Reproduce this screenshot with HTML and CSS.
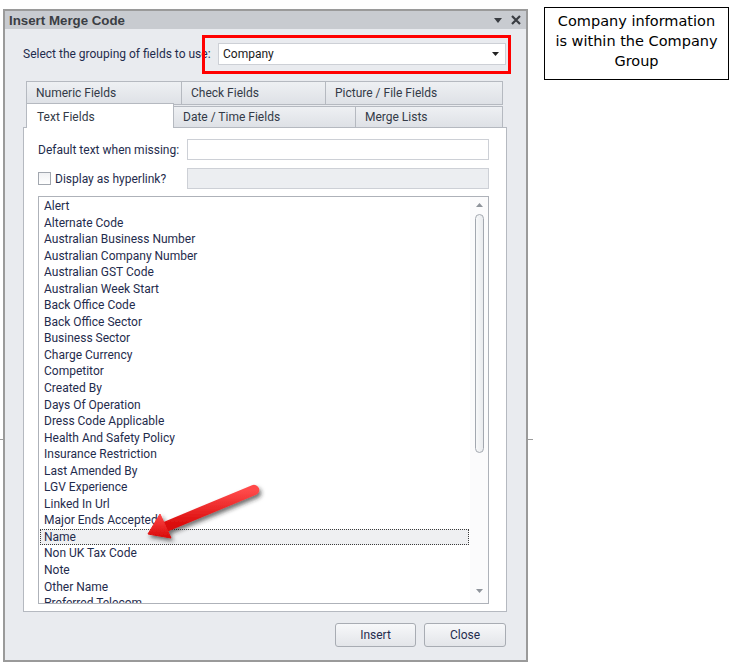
FILE: index.html
```html
<!DOCTYPE html>
<html lang="en">
<head>
    <meta charset="UTF-8">
    <meta name="viewport" content="width=device-width, initial-scale=1.0">
    <title>Insert Merge Code</title>
    <link rel="stylesheet" href="styles.css">
</head>
<body>
    <div class="backdrop-line"></div>

    <div class="dialog">
        <div class="titlebar">
            <span class="title">Insert Merge Code</span>
            <div class="title-buttons">
                <svg width="8" height="5" viewBox="0 0 8 5"><path d="M0 0h8L4 5z" fill="#3a3d42"/></svg>
                <svg width="10" height="10" viewBox="0 0 10 10"><path d="M1 1l8 8M9 1l-8 8" stroke="#3a3d42" stroke-width="2.2"/></svg>
            </div>
        </div>

        <div class="dialog-body">
            <div class="select-row">
                <label class="select-label">Select the grouping of fields to use:</label>
                <div class="combo">
                    <span>Company</span>
                    <svg width="7" height="4" viewBox="0 0 7 4"><path d="M0 0h7L3.5 4z" fill="#222"/></svg>
                </div>
                <div class="highlight-box"></div>
            </div>

            <div class="tabs">
                <div class="tab-row back">
                    <div class="tab w-numeric">Numeric Fields</div>
                    <div class="tab w-check">Check Fields</div>
                    <div class="tab w-picture">Picture / File Fields</div>
                </div>
                <div class="tab-row front">
                    <div class="tab active w-text">Text Fields</div>
                    <div class="tab w-date">Date / Time Fields</div>
                    <div class="tab w-merge">Merge Lists</div>
                </div>
            </div>

            <div class="tab-page">
                <div class="field-row">
                    <label class="field-label">Default text when missing:</label>
                    <div class="textbox"></div>
                </div>
                <div class="field-row">
                    <div class="field-label check">
                        <span class="checkbox"></span>
                        <span>Display as hyperlink?</span>
                    </div>
                    <div class="textbox disabled"></div>
                </div>

                <div class="listbox">
                    <ul class="items">
                        <li>Alert</li>
                        <li>Alternate Code</li>
                        <li>Australian Business Number</li>
                        <li>Australian Company Number</li>
                        <li>Australian GST Code</li>
                        <li>Australian Week Start</li>
                        <li>Back Office Code</li>
                        <li>Back Office Sector</li>
                        <li>Business Sector</li>
                        <li>Charge Currency</li>
                        <li>Competitor</li>
                        <li>Created By</li>
                        <li>Days Of Operation</li>
                        <li>Dress Code Applicable</li>
                        <li>Health And Safety Policy</li>
                        <li>Insurance Restriction</li>
                        <li>Last Amended By</li>
                        <li>LGV Experience</li>
                        <li>Linked In Url</li>
                        <li>Major Ends Accepted</li>
                        <li class="selected">Name</li>
                        <li>Non UK Tax Code</li>
                        <li>Note</li>
                        <li>Other Name</li>
                        <li>Preferred Telecom</li>
                    </ul>
                    <div class="scrollbar">
                        <div class="scroll-btn">
                            <svg width="7" height="4" viewBox="0 0 7 4"><path d="M0 4h7L3.5 0z" fill="#8f949b"/></svg>
                        </div>
                        <div class="thumb"></div>
                        <div class="scroll-btn down">
                            <svg width="7" height="4" viewBox="0 0 7 4"><path d="M0 0h7L3.5 4z" fill="#8f949b"/></svg>
                        </div>
                    </div>
                </div>
            </div>

            <div class="buttons">
                <button class="btn w-insert">Insert</button>
                <button class="btn w-close">Close</button>
            </div>
        </div>
    </div>

    <div class="note">Company information<br>is within the Company<br>Group</div>

    <svg class="arrow" width="150" height="90" viewBox="130 470 150 90">
        <defs>
            <filter id="shadow" x="-20%" y="-20%" width="150%" height="160%">
                <feDropShadow dx="2" dy="3" stdDeviation="2" flood-color="#222" flood-opacity="0.65"/>
            </filter>
            <linearGradient id="red" x1="0" y1="0" x2="0" y2="1">
                <stop offset="0" stop-color="#ff4a4a"/>
                <stop offset="1" stop-color="#d80808"/>
            </linearGradient>
        </defs>
        <g filter="url(#shadow)" fill="url(#red)" stroke="url(#red)">
            <line x1="254" y1="490" x2="165" y2="527" stroke-width="10.5" stroke-linecap="round"/>
            <path d="M148 534 L160 514 L171 538 Z" stroke-width="1" stroke-linejoin="round"/>
        </g>
    </svg>
</body>
</html>
```

FILE: styles.css
```css
:root {
    --ink: #1f2c4d;
    --frame: #9a9a9a;
    --tab-border: #b5b9c0;
    --field-border: #cdd0d6;
    --body-bg: #e9ebef;
}

body {
    font-family: Roboto, "Liberation Sans", Arial, sans-serif;
    font-size: 12px;
    color: var(--ink);
    margin: 0;
    background: #fff;
    display: flex;
    align-items: flex-start;
    position: relative;
    min-height: 666px;
}

.backdrop-line {
    position: absolute;
    left: 0;
    top: 439px;
    width: 533px;
    height: 1px;
    background: #9c9c9c;
    z-index: -1;
}

/* dialog frame */

.dialog {
    margin: 9px 0 0 3px;
    width: 525px;
    height: 653px;
    box-sizing: border-box;
    border: 2px solid var(--frame);
    background: var(--body-bg);
    display: flex;
    flex-direction: column;
}

.titlebar {
    height: 18px;
    background: #c8cbd0;
    display: flex;
    align-items: center;
    justify-content: space-between;
    padding: 0 5px 0 4px;
}

.title {
    font-family: "Liberation Sans", Arial, sans-serif;
    font-weight: 700;
    font-size: 13.3px;
    color: #3b3e44;
}

.title-buttons {
    display: flex;
    align-items: center;
    gap: 9px;
}

.dialog-body {
    flex: 1;
    display: flex;
    flex-direction: column;
    padding-top: 14px;
}

/* grouping selector */

.select-row {
    position: relative;
    display: flex;
    align-items: center;
    padding-left: 18px;
}

.select-label {
    width: 195px;
    flex: none;
}

.combo {
    width: 288px;
    height: 22px;
    box-sizing: border-box;
    border: 1px solid var(--field-border);
    background: #fff;
    display: flex;
    align-items: center;
    justify-content: space-between;
    padding: 0 6px 0 4px;
    color: #1a1a1a;
}

.highlight-box {
    position: absolute;
    left: 197px;
    top: -8px;
    width: 309px;
    height: 39px;
    box-sizing: border-box;
    border: 3px solid #f00;
}

/* tabs */

.tabs {
    margin: 16px 0 0 21px;
}

.tab-row {
    display: flex;
    align-items: flex-end;
}

.tab-row.back {
    height: 24px;
}

.tab-row.front {
    height: 25px;
    margin-top: -2px;
}

.tab {
    box-sizing: border-box;
    height: 24px;
    border: 1px solid var(--tab-border);
    margin-left: -1px;
    background: linear-gradient(#eef0f3, #dee1e6);
    color: #333a47;
    display: flex;
    align-items: center;
    padding-left: 9px;
}

.tab:first-child {
    margin-left: 0;
}

.tab-row.front .tab {
    height: 22px;
}

.tab-row.front .tab.active {
    height: 25px;
    background: #fff;
    border-bottom: none;
    position: relative;
    z-index: 1;
    padding-left: 10px;
    padding-top: 1px;
}

.w-numeric { width: 156px; }
.w-check { width: 145px; }
.w-picture { width: 178px; }
.w-text { width: 148px; }
.w-date { width: 183px; }
.w-merge { width: 148px; }

/* tab page */

.tab-page {
    margin: -1px 0 0 18px;
    width: 484px;
    height: 485px;
    box-sizing: border-box;
    border: 1px solid var(--tab-border);
    background: #fff;
    padding: 11px 0 0 14px;
}

.field-row {
    display: flex;
    align-items: center;
    height: 21px;
}

.field-row + .field-row {
    margin-top: 8px;
}

.field-label {
    width: 149px;
    flex: none;
}

.field-label.check {
    display: flex;
    align-items: center;
    gap: 4px;
}

.checkbox {
    width: 13px;
    height: 13px;
    box-sizing: border-box;
    border: 1px solid #a2a7af;
    background: linear-gradient(#f1f2f4, #fff);
}

.textbox {
    width: 302px;
    height: 21px;
    box-sizing: border-box;
    border: 1px solid var(--field-border);
    background: #fff;
}

.textbox.disabled {
    background: #eceef1;
}

.listbox {
    margin-top: 7px;
    width: 451px;
    height: 408px;
    box-sizing: border-box;
    border: 1px solid #aeb2b9;
    display: flex;
}

.items {
    flex: 1;
    list-style: none;
    margin: 0;
    padding: 1px 1px 0;
    overflow: hidden;
}

.items li {
    height: 16.55px;
    line-height: 16.55px;
    padding-left: 4px;
    box-sizing: border-box;
    white-space: nowrap;
}

.items li.selected {
    border: 1px dotted #3c3c3c;
    background: #eff0f2;
    line-height: 14.5px;
    padding-left: 3px;
}

.scrollbar {
    width: 18px;
    flex: none;
    background: #fbfbfc;
    display: flex;
    flex-direction: column;
    align-items: center;
}

.scroll-btn {
    height: 16px;
    display: flex;
    align-items: center;
    justify-content: center;
}

.scroll-btn.down {
    margin-top: auto;
    margin-bottom: 4px;
}

.thumb {
    margin-top: 1px;
    width: 9px;
    height: 239px;
    box-sizing: border-box;
    border: 1px solid #a3a8b0;
    border-radius: 5px;
    background: linear-gradient(90deg, #f7f8f9, #e9ebee);
}

/* buttons */

.buttons {
    display: flex;
    justify-content: flex-end;
    gap: 8px;
    margin-top: 11px;
    padding-right: 20px;
}

.btn {
    height: 24px;
    border: 1px solid #a8acb3;
    border-radius: 3px;
    background: linear-gradient(#f7f8fa, #e3e5e9);
    font-family: inherit;
    font-size: 12px;
    color: var(--ink);
    padding: 0;
}

.w-insert { width: 81px; }
.w-close { width: 82px; }

/* annotation */

.note {
    margin: 7px 0 0 16px;
    width: 185px;
    height: 73px;
    box-sizing: border-box;
    border: 1px solid #000;
    font-family: "DejaVu Sans", sans-serif;
    font-size: 14.5px;
    line-height: 20px;
    color: #000;
    text-align: center;
    padding-top: 3px;
}

.arrow {
    position: absolute;
    left: 130px;
    top: 470px;
}
```
